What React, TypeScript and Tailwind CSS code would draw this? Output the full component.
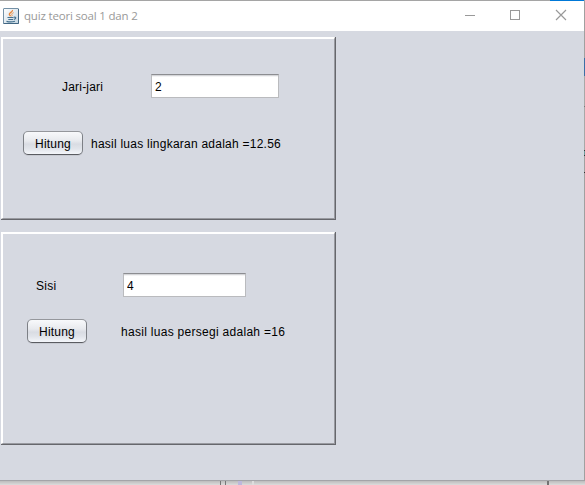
import type { ReactNode } from "react";

function JavaIcon() {
  return (
    <svg width="16" height="16" viewBox="0 0 16 16" className="shrink-0">
      <defs>
        <linearGradient id="jbg" x1="0" y1="0" x2="1" y2="1">
          <stop offset="0" stopColor="#ffffff" />
          <stop offset="1" stopColor="#c3d5e1" />
        </linearGradient>
      </defs>
      <rect x="0.5" y="0.5" width="15" height="15" rx="0.5" fill="url(#jbg)" stroke="#7390a6" />
      <path d="M0.5 15.500H15.500V1" fill="none" stroke="#426784" />
      <path d="M9.500 2C10 4 6.500 4.500 6.300 6.200C6.300 7.200 7.300 7.500 7.600 8.300" fill="none" stroke="#e8853a" strokeWidth="1.300" />
      <path d="M10.700 4.700C8.300 5.500 8.400 6.300 9.100 7.100C9.400 7.600 9 8 8.600 8.400" fill="none" stroke="#ee9a55" strokeWidth="1" />
      <path d="M4.500 9.500H10.500M5.300 11.500H10M3.500 13.300C6 14 9.500 14 12 13.200" fill="none" stroke="#45718f" strokeWidth="1.200" />
      <path d="M10.800 9.200C13.600 8.600 13.200 11 10.800 11.400" fill="none" stroke="#45718f" strokeWidth="1.100" />
    </svg>
  );
}

function TitleBar() {
  return (
    <header className="flex h-[30px] shrink-0 items-center bg-white pl-[3px]">
      <JavaIcon />
      <span className="ml-[5px] w-[420px] whitespace-nowrap font-['Open_Sans',sans-serif] text-[11.5px] leading-4 tracking-[-0.18px] text-[#999999]">
        quiz teori soal 1 dan 2
      </span>
      <svg width="140" height="30" viewBox="444 1 140 30" fill="none" stroke="#999999" shapeRendering="crispEdges" className="shrink-0">
        <path d="M465 15.500H475" />
        <rect x="510.500" y="10.500" width="9" height="9" />
        <path d="M556 10L566 20M566 10L556 20" strokeWidth="1.150" shapeRendering="auto" />
      </svg>
    </header>
  );
}

function Panel({ className, children }: { className: string; children: ReactNode }) {
  return (
    <section className="w-[335px] border-r border-b border-[#66676c]">
      <div className={`border-t-2 border-r border-b border-l-2 border-t-white border-r-[#999aa0] border-b-[#999aa0] border-l-white ${className}`}>
        {children}
      </div>
    </section>
  );
}

function Field({ value, className }: { value: string; className: string }) {
  return (
    <input
      readOnly
      value={value}
      className={`h-6 border border-t-[#8c8d91] border-r-[#babbbe] border-b-[#babbbe] border-l-[#babbbe] bg-white bg-[linear-gradient(#d5d6d9_0px,#d5d6d9_1px,#f3f3f4_1px,#f3f3f4_2px,#ffffff_2px)] px-[3px] pt-[2px] text-[12px] leading-[20px] outline-none ${className}`}
    />
  );
}

function HitungButton() {
  return (
    <button className="h-6 w-[60px] shrink-0 rounded-[5px] border border-t-[#95979c] border-r-[#7d8086] border-b-[#5a5c61] border-l-[#7d8086] bg-[linear-gradient(#f8f9fb_0%,#e8eaee_40%,#d9dce3_55%,#e1e4ea_75%,#f4f6fa_100%)] pt-px text-[12px] leading-[20px] tracking-[0.2px] shadow-[0_1px_0_#c7cad1]">
      Hitung
    </button>
  );
}

export default function App() {
  return (
    <div className="flex h-[485px] w-[585px] flex-col overflow-hidden bg-[#dddddd] font-['Liberation_Sans',Arial,sans-serif] text-[12px] text-black">
      <div className="flex h-[481px] shrink-0">
        <main className="flex w-[584px] flex-col border-b border-[#a3a4a8] bg-[#d6d9e1]">
          <div className="h-px shrink-0 bg-[linear-gradient(90deg,#a5a5a5_550px,#0078d7_550px)]" />
          <TitleBar />
          <div className="flex flex-col gap-3 pt-[6px] pl-px">
            <Panel className="h-[182px]">
              <div className="flex items-center pt-[35px] pl-[59px]">
                <span className="w-[89px] pt-[2px] leading-4 tracking-[0.2px]">Jari-jari</span>
                <Field value="2" className="w-[128px]" />
              </div>
              <div className="mt-[33px] flex items-center gap-2 pl-5">
                <HitungButton />
                <span className="pt-[2px] leading-4 tracking-[0.24px] whitespace-nowrap">hasil luas lingkaran adalah =12.56</span>
              </div>
            </Panel>
            <Panel className="h-[212px]">
              <div className="flex items-center pt-[39px] pl-[33px]">
                <span className="w-[87px] pt-[2px] leading-4 tracking-[0.3px]">Sisi</span>
                <Field value="4" className="w-[123px]" />
              </div>
              <div className="mt-[22px] flex items-center gap-[34px] pl-6">
                <HitungButton />
                <span className="pt-[2px] leading-4 tracking-[0.29px] whitespace-nowrap">hasil luas persegi adalah =16</span>
              </div>
            </Panel>
          </div>
        </main>
        <aside className="w-px bg-[linear-gradient(#a0a0a0_0px,#a0a0a0_58px,#3c6fa5_58px,#3c6fa5_76px,#a8a8a8_76px,#a8a8a8_106px,#777_106px,#777_107px,#a8a8a8_107px,#a8a8a8_150px,#333_150px,#333_151px,#6a9b9b_151px,#6a9b9b_155px,#333_155px,#333_156px,#a0a0a0_156px,#a0a0a0_172px,#333_172px,#333_173px,#a0a0a0_173px)]" />
      </div>
      <footer className="flex h-1 shrink-0 bg-[linear-gradient(#bcbcbc,#dcdcdc)]">
        <div className="ml-[220px] w-[6px] border-x border-[#777777]" />
        <div className="ml-3 w-1 bg-[#bdb8dc]" />
        <div className="ml-[10px] w-[2px] bg-[#dddddd]" />
        <div className="ml-[293px] w-[2px] bg-[#727272]" />
      </footer>
    </div>
  );
}
